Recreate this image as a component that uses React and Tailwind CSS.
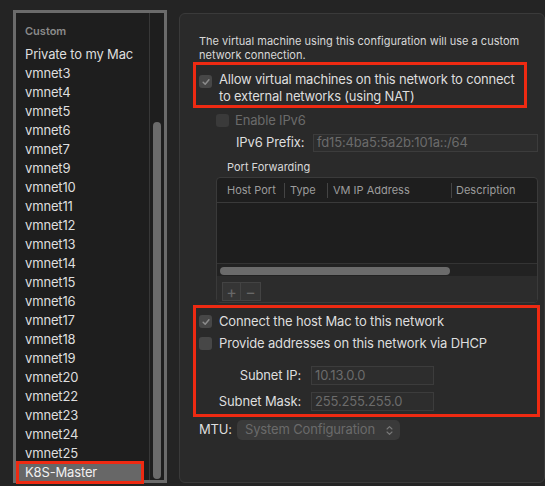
import { useMemo } from 'react'

const networks = [
  'Private to my Mac',
  'vmnet3',
  'vmnet4',
  'vmnet5',
  'vmnet6',
  'vmnet7',
  'vmnet9',
  'vmnet10',
  'vmnet11',
  'vmnet12',
  'vmnet13',
  'vmnet14',
  'vmnet15',
  'vmnet16',
  'vmnet17',
  'vmnet18',
  'vmnet19',
  'vmnet20',
  'vmnet22',
  'vmnet23',
  'vmnet24',
  'vmnet25',
]

export default function App() {
  return (
    <div className="flex h-[486px] w-[545px] items-start overflow-hidden bg-[#242424] font-['Inter',sans-serif] text-[13px] tracking-[-0.15px] text-[#dedede] antialiased">
      <NetworkList />
      <SettingsPanel />
    </div>
  )
}

function NetworkList() {
  return (
    <div className="ml-[13px] mt-[10px] flex h-[473px] w-[154px] shrink-0 border-[3px] border-[#6b6b6b] bg-[#1e1e1e]">
      <div className="flex w-[133px] flex-col">
        <div className="ml-[9px] mt-[11px] h-[14px] text-[11px] font-semibold leading-[14px] tracking-normal text-[#8a8a8a]">
          Custom
        </div>
        <div className="mt-[7px] flex flex-col">
          {networks.map((n) => (
            <div key={n} className="h-[19px] pl-[9px] leading-[19px]">
              {n}
            </div>
          ))}
          {/* selected row with the red annotation box */}
          <div className="-mt-[2px] h-[23px] w-[128px] border-[3px] border-[#ee2a12] bg-[#676767] pl-[6px] leading-[17px] text-[#f0f0f0]">
            K8S-Master
          </div>
        </div>
      </div>
      <div className="flex w-[15px] border-l border-[#383838] pt-[109px]">
        <div className="ml-[3px] h-[357px] w-[8px] rounded-full bg-[#6b6b6b]" />
      </div>
    </div>
  )
}

function Check({ checked, dim }) {
  return (
    <span
      className={`flex h-[13px] w-[13px] shrink-0 items-center justify-center rounded-[3px] ${
        dim ? 'bg-[#3a3a3a]' : 'bg-[#474747]'
      }`}
    >
      {checked && (
        <svg viewBox="0 0 12 12" className="h-[10px] w-[10px]">
          <path
            d="M2.6 6.3 5 8.7 9.5 3.3"
            fill="none"
            stroke="#8c8c8c"
            strokeWidth="1.8"
            strokeLinecap="round"
            strokeLinejoin="round"
          />
        </svg>
      )}
    </span>
  )
}

function Field({ value, className }) {
  return (
    <div
      className={`flex items-center border border-[#3c3c3c] bg-[#2d2d2d] pl-[3px] text-[13px] text-[#6b6b6b] ${className}`}
    >
      {value}
    </div>
  )
}

function SettingsPanel() {
  const columns = useMemo(
    () => [
      { label: 'Host Port', w: 'w-[67px]', pad: 'pl-[10px]' },
      { label: 'Type', w: 'w-[43px]', pad: 'pl-[5px]' },
      { label: 'VM IP Address', w: 'w-[124px]', pad: 'pl-[5px]' },
      { label: 'Description', w: 'flex-1', pad: 'pl-[4px]' },
    ],
    []
  )

  return (
    <div className="ml-[12px] mt-[13px] flex h-[470px] w-[366px] shrink-0 flex-col rounded-[6px] border border-[#3a3a3a] bg-[#2a2a2a]">
      <p className="ml-[19px] mt-[20px] w-[340px] text-[11px] leading-[14px] tracking-normal text-[#d8d8d8]">
        The virtual machine using this configuration will use a custom network connection.
      </p>

      {/* NAT */}
      <div className="ml-[13px] flex h-[46px] w-[334px] items-start gap-[7px] border-[3px] border-[#ee2a12] pl-[3px] pt-[6px]">
        <div className="pt-[4px]">
          <Check checked />
        </div>
        <span className="whitespace-nowrap leading-[17px] tracking-[-0.2px]">
          Allow virtual machines on this network to connect
          <br />
          to external networks (using NAT)
        </span>
      </div>

      <div className="ml-[36px] mt-[5px] flex h-[15px] items-center gap-[6px] text-[#6a6a6a]">
        <Check dim />
        <span>Enable IPv6</span>
      </div>

      <div className="ml-[56px] mt-[6px] flex h-[18px] items-center">
        <span className="w-[77px] shrink-0">IPv6 Prefix:</span>
        <Field value="fd15:4ba5:5a2b:101a::/64" className="h-[18px] w-[225px]" />
      </div>

      <div className="ml-[47px] mt-[8px] h-[14px] text-[11px] leading-[14px] tracking-normal text-[#d8d8d8]">
        Port Forwarding
      </div>

      {/* port forwarding table */}
      <div className="ml-[36px] mt-[3px] flex w-[322px] flex-col overflow-hidden rounded-[4px] border border-[#3a3a3a] bg-[#1e1e1e]">
        <div className="flex h-[25px] items-center border-b border-[#3a3a3a] text-[11px] tracking-normal text-[#9c9c9c]">
          {columns.map((c, i) => (
            <div key={c.label} className={`flex h-full items-center ${c.w}`}>
              {i > 0 && <span className="h-[15px] w-px bg-[#444]" />}
              <span className={c.pad}>{c.label}</span>
            </div>
          ))}
        </div>
        <div className="h-[60px]" />
        <div className="h-[13px] border-t border-[#343434] bg-[#222] pt-[3px]">
          <div className="ml-[3px] h-[8px] w-[230px] rounded-full bg-[#6b6b6b]" />
        </div>
        <div className="h-[26px] bg-[#2c2c2c] pl-[5px] pt-[6px]">
          <div className="flex h-[19px] w-[39px] border border-[#434343] bg-[#353535] text-[#686868]">
            <span className="flex w-[18px] items-center justify-center border-r border-[#434343] text-[16px] leading-none">
              +
            </span>
            <span className="flex flex-1 items-center justify-center text-[16px] leading-none">
              −
            </span>
          </div>
        </div>
      </div>

      {/* host / DHCP */}
      <div className="ml-[13px] mt-[2px] flex h-[112px] w-[347px] flex-col border-[3px] border-[#ee2a12] pl-[3px] pt-[5px]">
        <div className="flex h-[17px] items-center gap-[7px]">
          <Check checked />
          <span>Connect the host Mac to this network</span>
        </div>
        <div className="mt-[5px] flex h-[17px] items-center gap-[7px]">
          <Check />
          <span>Provide addresses on this network via DHCP</span>
        </div>
        <div className="mt-[14px] flex h-[19px] items-center">
          <span className="w-[103px] shrink-0 pr-[1px] text-right">Subnet IP:</span>
          <Field value="10.13.0.0" className="ml-[9px] h-[19px] w-[123px]" />
        </div>
        <div className="mt-[7px] flex h-[19px] items-center">
          <span className="w-[103px] shrink-0 pr-[1px] text-right">Subnet Mask:</span>
          <Field value="255.255.255.0" className="ml-[9px] h-[19px] w-[123px]" />
        </div>
      </div>

      <div className="ml-[19px] mt-[3px] flex h-[20px] items-center">
        <span className="w-[38px] shrink-0">MTU:</span>
        <div className="flex h-[20px] w-[163px] items-center justify-between rounded-[5px] bg-[#3a3a3a] pl-[8px] pr-[7px] text-[#6a6a6a]">
          <span>System Configuration</span>
          <svg viewBox="0 0 8 12" className="h-[11px] w-[7px]">
            <path
              d="M1.2 4.3 4 1.5l2.8 2.8M1.2 7.7 4 10.5l2.8-2.8"
              fill="none"
              stroke="#7a7a7a"
              strokeWidth="1.3"
              strokeLinecap="round"
              strokeLinejoin="round"
            />
          </svg>
        </div>
      </div>
    </div>
  )
}
